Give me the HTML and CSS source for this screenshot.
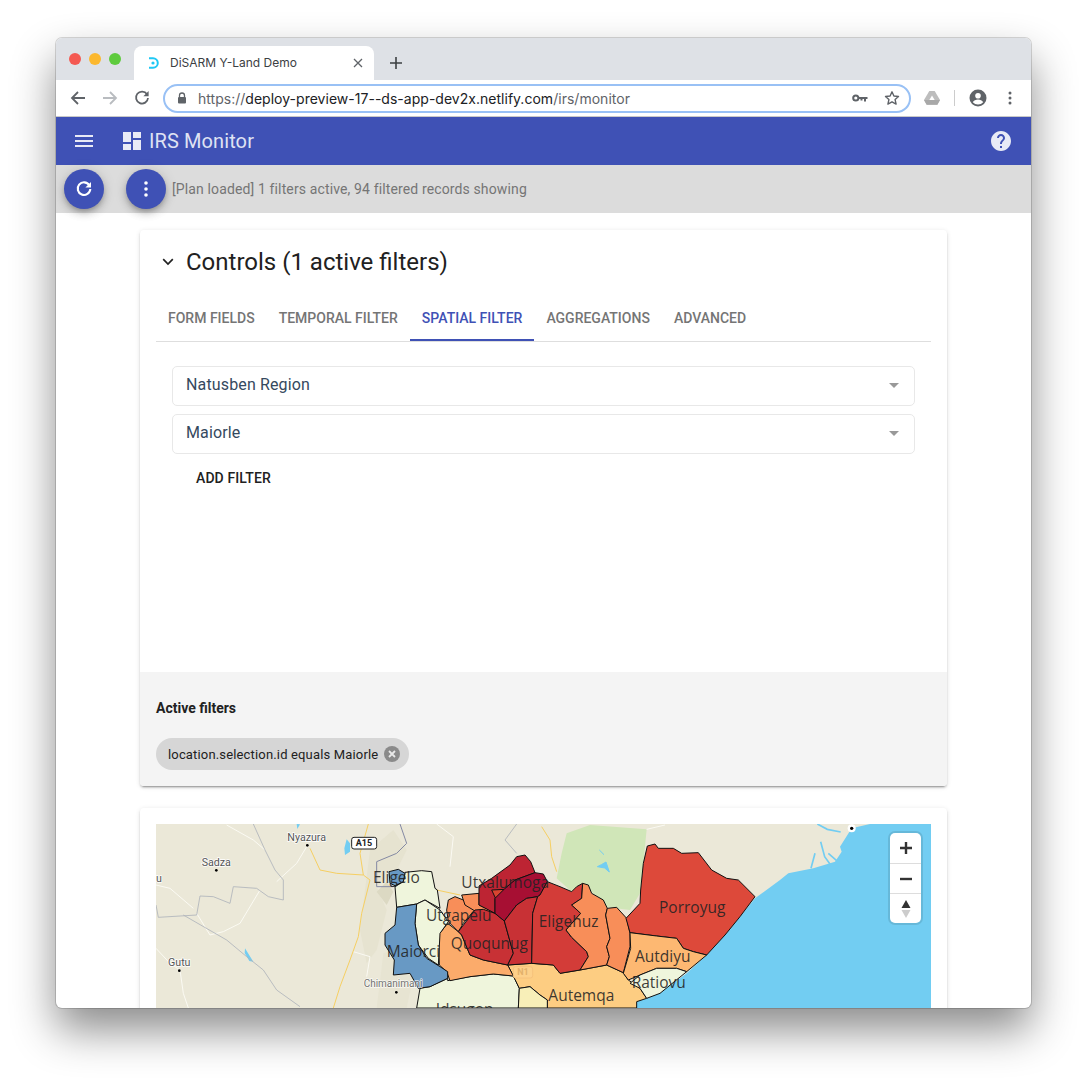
FILE: index.html
```html
<!DOCTYPE html>
<html lang="en">
<head>
<meta charset="utf-8">
<title>DiSARM Y-Land Demo</title>
<link rel="stylesheet" href="styles.css">
</head>
<body>
<div class="window">
  <div class="titlebar">
    <div class="lights"><span class="light red"></span><span class="light amber"></span><span class="light green"></span></div>
    <div class="tab">
      <svg class="favicon" viewBox="0 0 12 12" width="12" height="12"><path d="M1 1.200h4a4.800 4.800 0 0 1 0 9.600H1" fill="none" stroke="#1ec8f5" stroke-width="2"/><circle cx="5" cy="6" r="1.600" fill="#1ec8f5"/></svg>
      <span class="tab-title">DiSARM Y-Land Demo</span>
      <svg class="tab-close" viewBox="0 0 10 10" width="10" height="10"><path d="M1 1l8 8M9 1l-8 8" stroke="#5f6368" stroke-width="1.300"/></svg>
    </div>
    <svg class="new-tab" viewBox="0 0 12 12" width="12" height="12"><path d="M6 0v12M0 6h12" stroke="#3c4043" stroke-width="1.600"/></svg>
  </div>

  <div class="toolbar">
    <span class="tool"><svg viewBox="0 0 16 16" width="16" height="16"><path d="M15 8H2.500M8 2L2 8l6 6" fill="none" stroke="#5f6368" stroke-width="1.800"/></svg></span>
    <span class="tool"><svg viewBox="0 0 16 16" width="16" height="16"><path d="M1 8h12.500M8 2l6 6-6 6" fill="none" stroke="#b9bcc0" stroke-width="1.800"/></svg></span>
    <span class="tool"><svg viewBox="0 0 16 16" width="16" height="16"><path d="M13 4.200A6 6 0 1 0 14 8" fill="none" stroke="#5f6368" stroke-width="1.800"/><path d="M14.600 1v5.200H9.400z" fill="#5f6368"/></svg></span>
    <div class="omnibox">
      <svg class="lock" viewBox="0 0 10 12" width="10" height="12"><path d="M2.500 5V3.500a2.500 2.500 0 0 1 5 0V5" fill="none" stroke="#5f6368" stroke-width="1.300"/><rect x="1" y="5" width="8" height="6.500" rx="1" fill="#5f6368"/></svg>
      <span class="url"><span class="url-dim">https://</span>deploy-preview-17--ds-app-dev2x.netlify.com<span class="url-dim">/irs/monitor</span></span>
      <svg class="key" viewBox="0 0 16 9" width="16" height="9"><circle cx="3.800" cy="4" r="2.600" fill="none" stroke="#5f6368" stroke-width="2"/><path d="M6 3h9.500v2H14v2.400h-2V5h-1.500v1.600h-2V5H6z" fill="#5f6368"/></svg>
      <svg class="star" viewBox="0 0 16 16" width="16" height="16"><path d="M8 1.800l1.900 4.200 4.600.5-3.400 3.100 1 4.500L8 11.800l-4.100 2.300 1-4.500L1.500 6.500l4.600-.5z" fill="none" stroke="#5f6368" stroke-width="1.400" stroke-linejoin="round"/></svg>
    </div>
    <svg class="drive" viewBox="0 0 16 14" width="16" height="14"><path d="M5.300 0h5.400L16 9l-2.700 4.700H2.700L0 9z" fill="#bdbdbd"/><path d="M8 4.500L10.700 9H5.300z" fill="#fff"/><path d="M0 9h16l-2.700 4.700H2.700z" fill="#a8a8a8"/></svg>
    <span class="separator"></span>
    <svg class="account" viewBox="0 0 18 18" width="18" height="18"><circle cx="9" cy="9" r="8.500" fill="#5f6368"/><circle cx="9" cy="6.800" r="2.800" fill="#fff"/><path d="M3.800 13.200c1-2 3-2.800 5.200-2.800s4.200.8 5.200 2.800A6.900 6.900 0 0 1 9 15.500a6.900 6.900 0 0 1-5.200-2.300z" fill="#fff"/></svg>
    <svg class="kebab" viewBox="0 0 4 14" width="4" height="14"><circle cx="2" cy="2" r="1.500" fill="#5f6368"/><circle cx="2" cy="7" r="1.500" fill="#5f6368"/><circle cx="2" cy="12" r="1.500" fill="#5f6368"/></svg>
  </div>

  <header class="appbar">
    <svg class="menu-icon" viewBox="0 0 18 12" width="18" height="12"><path d="M0 1h18M0 6h18M0 11h18" stroke="#e8eaf6" stroke-width="2"/></svg>
    <svg class="dash-icon" viewBox="0 0 18 18" width="18" height="18"><path d="M0 0h8v10H0zM0 12h8v6H0zM10 0h8v6h-8zM10 8h8v10h-8z" fill="#e8eaf6"/></svg>
    <span class="app-title">IRS Monitor</span>
    <svg class="help-icon" viewBox="2 2 20 20" width="20" height="20"><path fill="#e8eaf6" d="M12 2C6.480 2 2 6.480 2 12s4.480 10 10 10 10-4.480 10-10S17.520 2 12 2zm1 17h-2v-2h2v2zm2.070-7.750l-.9.920C13.450 12.900 13 13.500 13 15h-2v-.5c0-1.100.45-2.100 1.170-2.830l1.240-1.260c.37-.36.59-.86.59-1.410 0-1.100-.9-2-2-2s-2 .9-2 2H8c0-2.210 1.790-4 4-4s4 1.790 4 4c0 .88-.36 1.680-.93 2.250z"/></svg>
  </header>

  <div class="statusbar">
    <span class="fab"><svg viewBox="0 0 18 18" width="18" height="18"><path d="M14.300 5.200A6.300 6.300 0 1 0 15.300 9" fill="none" stroke="#fff" stroke-width="2.100"/><path d="M16 2v5.600h-5.600z" fill="#fff"/></svg></span>
    <span class="fab fab-second"><svg viewBox="0 0 4 16" width="4" height="16"><circle cx="2" cy="2" r="1.800" fill="#fff"/><circle cx="2" cy="8" r="1.800" fill="#fff"/><circle cx="2" cy="14" r="1.800" fill="#fff"/></svg></span>
    <span class="status-text">[Plan loaded] 1 filters active, 94 filtered records showing</span>
  </div>

  <main class="content">
    <section class="card controls">
      <div class="controls-head">
        <svg class="chevron" viewBox="0 0 12 8" width="12" height="8"><path d="M1.200 1.200L6 6l4.800-4.800" fill="none" stroke="#212121" stroke-width="1.700"/></svg>
        <h2 class="controls-title">Controls (1 active filters)</h2>
      </div>
      <nav class="tabs">
        <span class="tab-item">Form fields</span>
        <span class="tab-item">Temporal filter</span>
        <span class="tab-item tab-active">Spatial filter</span>
        <span class="tab-item">Aggregations</span>
        <span class="tab-item">Advanced</span>
      </nav>
      <div class="panel">
        <div class="select"><span>Natusben Region</span><i class="caret"></i></div>
        <div class="select"><span>Maiorle</span><i class="caret"></i></div>
        <button class="add-filter" type="button">Add filter</button>
      </div>
      <div class="active-filters">
        <div class="active-label">Active filters</div>
        <div class="chip">
          <span>location.selection.id equals Maiorle</span>
          <svg class="chip-close" viewBox="0 0 16 16" width="16" height="16"><circle cx="8" cy="8" r="8" fill="#8a8a8a"/><path d="M5 5l6 6M11 5l-6 6" stroke="#e8e8e8" stroke-width="1.800"/></svg>
        </div>
      </div>
    </section>

    <section class="card map-card">
      <div class="map">
        <svg class="map-svg" viewBox="18 12 2325 552" width="775" height="184" preserveAspectRatio="none">
          <rect x="18" y="12" width="2325" height="552" fill="#ebe8d8"/>
          <!-- terrain -->
          <path d="M660 90l70-60 40 60-30 60-60 50 30 70-30 120-30 40-20-100z" fill="#e6e3d0"/>
          <path d="M700 400l60-20 30 90-20 94h-90z" fill="#e7e4d2"/>
          <path d="M680 215l30-30 20 30-20 40zM800 200l25-15 10 30-25 10z" fill="#dcd9c3"/>
          <g transform="translate(1170 0)"><path d="M80 40l70-25 170 13-10 102-10 90-30 50-70-8-70-72-35 25-45-40 15-75z" fill="#d0e6b8"/></g>
          <!-- sea -->
          <g transform="translate(1170 0)">
            <path d="M990 12l-55 13-35 55 5 15-20 30-65 20-75 15-25 20-75 55-85 105-60 65-60 55-80 60-70 25v19h883V12z" fill="#72cdf2"/>
            <path d="M842 65l12 45 18 25M825 100l-12 45M865 100l25 22M832 12l30 16 40 8" fill="none" stroke="#72cdf2" stroke-width="5"/>
            <path d="M178 90l14 14M172 140l22 4 14 12-10-30-14 8z" fill="#72cdf2" stroke="#72cdf2" stroke-width="3"/>
          </g>
          <!-- lakes -->
          <path d="M590 58l10 12v25l-15 10-2-20zM285 385l25 40-12-2-14-24zM440 12l10 1-8 14z" fill="#72cdf2"/>
          <!-- roads -->
          <g fill="none" stroke="#fbfaf3" stroke-width="3">
            <path d="M230 15l80 45 35 30M380 185l60-55 30-50M330 210l-60 100-50 25-40 10-40-65M18 195l42 10 70 60M18 385l42 45 30 20 10 70 15 44M610 395l50 15-10 60M860 12l50 38-10 90"/>
            <path d="M1490 28l55-13" />
          </g>
          <g fill="none" stroke="#f6cf62" stroke-width="3">
            <path d="M655 12l-25 88 10 65 20 15-25 100-10 70-25 70-30 80-20 64M480 85l30 65 50 10 80 5M860 210l70 15M1175 20l25 40 5 50 15 45"/>
          </g>
          <!-- borders -->
          <g fill="none" stroke="#afb3ba" stroke-width="2.500">
            <path d="M310 12l35 78 30 60 25 30v60l-45-10-35-25-70-5-10 50-50-20-40-2-10 57-115 7-7-37M100 285l130 75 60 50 50 40 40 60 70 50"/>
            <path d="M1100 12l-35 48 35 40"/>
          </g>
          <path d="M750 12l20 58-30 30-60 25v75h50" fill="none" stroke="#8489a3" stroke-width="3"/>

          <!-- regions -->
          <g class="regions">
            <polygon class="r-pale" points="893,482 960,470 1030,462 1090,468 1108,505 1105,564 800,564 810,505 840,500 893,475"/>
            <g transform="translate(930 90)">
              <polygon class="r-sand" points="143,345 215,340 280,345 300,370 360,360 440,345 490,368 505,390 540,415 560,445 530,455 530,474 262,474 262,450 240,435 210,410 178,415 160,378"/>
              <polygon class="r-yellow" points="178,415 210,410 240,435 262,450 262,474 175,474"/>
            </g>
            <polygon class="r-peach" points="865,345 893,310 925,335 935,345 960,405 1000,420 1073,435 1090,468 1030,462 960,470 900,482 890,455 868,435"/>
            <polygon class="r-pale" points="765,157 815,152 845,155 855,205 862,210 870,265 825,240 800,252 740,262 735,200 760,185"/>
            <polygon class="r-orange" points="895,240 915,230 940,240 975,268 940,310 925,335 895,305 890,270"/>
            <polygon class="r-pale" points="800,252 825,240 870,270 895,305 870,340 865,435 835,415 805,375 795,310"/>
            <path class="r-blue" d="M740 262l60-10-5 58 10 65 25 40 40 25 23 15v20l-53 25-35 5-25-45-50 5 3-45-28-45v-35l30-25zM717 155l28-7 20 12-5 25-25 12-15-7z"/>
            <g transform="translate(930 90)">
              <polygon class="r-orange" points="5,135 57,130 57,165 100,185 90,215 40,180 15,165"/>
              <polygon class="r-red" points="-5,245 45,180 70,178 105,190 133,213 160,310 143,345 70,330 30,315 5,255"/>
              <polygon class="r-crimson" points="57,108 95,85 150,45 170,20 195,15 212,35 225,68 165,90 105,145 105,190 57,165"/>
              <polygon class="r-inset" points="95,120 135,118 108,148"/>
              <polygon class="r-maroon" points="105,145 135,115 165,90 225,68 250,72 262,95 240,135 233,140 200,145 170,165 133,213 105,190"/>
              <polygon class="r-red" points="133,213 170,165 200,145 233,140 218,190 215,340 143,345 160,310"/>
              <polygon class="r-redorange" points="233,140 240,135 262,95 300,110 335,125 350,110 368,100 365,145 335,165 362,190 318,240 335,262 380,305 385,320 360,360 300,370 280,345 215,340 218,190"/>
              <polygon class="r-orange" points="368,100 385,105 395,130 430,150 442,175 437,195 450,265 440,290 448,320 440,345 360,360 385,320 380,305 335,262 318,240 362,190 335,165 365,145"/>
              <polygon class="r-orange" points="442,175 470,172 500,205 510,250 510,290 490,368 440,345 448,320 440,290 450,265 437,195"/>
            </g>
            <g transform="translate(1170 0)">
              <path class="r-tomato" d="M322 78l23-6 10 13h45l25 15 50-2 40 52 45 25 35 5 50 50-45 60-45 55-55 60-40-10-30-10-20-30-60-7-80-10-12-43 42-45 2-40 8-80z"/>
              <path class="r-tan" d="M270 338l80 10 60 7 20 30 30 10 40 10-60 50-30-10h-60l-50 20-35 15-15-20 22-75z"/>
              <path class="r-pale" d="M300 465l50-20h60l30 10-80 65-40 15-20-30-30-15z"/>
            </g>
          </g>

          <!-- base map places -->
          <g class="places">
            <text class="place" x="412" y="62">Nyazura</text>
            <text class="place" x="155" y="137">Sadza</text>
            <text class="place" x="54" y="437">Gutu</text>
            <text class="place" x="18" y="186">u</text>
            <text class="place place-fade" x="641" y="502">Chimanimani</text>
            <circle cx="472" cy="76" r="4"/><circle cx="199" cy="151" r="4"/><circle cx="88" cy="452" r="4"/><circle cx="739" cy="517" r="4"/>
            <circle cx="2105" cy="25" r="12" fill="#fff"/><circle cx="2105" cy="25" r="5"/>
          </g>
          <rect x="605" y="52" width="75" height="35" rx="7" fill="#fff" stroke="#222" stroke-width="3"/>
          <text class="shield" x="642" y="78">A15</text>
          <rect x="1090" y="440" width="58" height="34" rx="7" fill="#fdd08a" stroke="#f6c27c" stroke-width="3"/>
          <text class="shield shield-faint" x="1119" y="466">N1</text>

          <!-- region labels -->
          <g class="labels">
            <text class="label" x="669" y="190">Eligelo</text>
            <text class="label" x="934" y="203">Utxalumoga</text>
            <text class="label" x="828" y="302">Utgapelu</text>
            <text class="label" x="902" y="386">Quoqunug</text>
            <text class="label" x="710" y="412">Maiorci</text>
            <text class="label" x="1166" y="322">Eligehuz</text>
            <text class="label" x="1527" y="280">Porroyug</text>
            <text class="label" x="1455" y="425">Autdiyu</text>
            <text class="label" x="1445" y="504">Ratiovu</text>
            <text class="label" x="1195" y="544">Autemqa</text>
            <text class="label" x="857" y="585">Idsugon</text>
          </g>
        </svg>
        <div class="map-controls">
          <span class="map-btn"><svg viewBox="0 0 12 12" width="12" height="12"><path d="M6 0v12M0 6h12" stroke="#333" stroke-width="2.400"/></svg></span>
          <span class="map-btn"><svg viewBox="0 0 12 12" width="12" height="12"><path d="M0 6h12" stroke="#333" stroke-width="2.400"/></svg></span>
          <span class="map-btn"><svg viewBox="0 0 10 18" width="10" height="18"><path d="M5 0l4.500 8H.5z" fill="#333"/><path d="M5 18L.5 10h9z" fill="#ccc"/></svg></span>
        </div>
      </div>
    </section>
  </main>
</div>
</body>
</html>
```
FILE: styles.css
```css
* { box-sizing: border-box; }
html, body { margin: 0; height: 1082px; overflow: hidden; background: #fff; }
body { padding: 38px 56px 74px; font-family: Roboto, "Liberation Sans", sans-serif; }

.window {
  width: 975px;
  height: 970px;
  overflow: hidden;
  border-radius: 6px;
  background: #fff;
  box-shadow: 0 0 0 1px rgba(0,0,0,.15), 0 22px 44px rgba(0,0,0,.46);
}

/* Browser chrome */
.titlebar { height: 42px; background: #dee1e6; display: flex; align-items: flex-end; }
.lights { display: flex; gap: 8px; margin: 0 13px; align-self: flex-start; padding-top: 15px; }
.light { width: 12px; height: 12px; border-radius: 50%; }
.red { background: #f45952; }
.amber { background: #fcb82e; }
.green { background: #5ecb3e; }
.tab {
  width: 240px; height: 34px;
  background: #fff;
  border-radius: 8px 8px 0 0;
  display: flex; align-items: center;
  padding: 0 11px 0 14px;
}
.favicon { flex: none; margin-right: 10px; }
.tab-title { font: 12px Inter, Roboto, sans-serif; color: #3c4043; flex: 1; white-space: nowrap; padding-bottom: 2px; }
.new-tab { margin: 0 0 11px 16px; }

.toolbar {
  height: 37px;
  background: #fff;
  border-bottom: 1px solid #c9c9c9;
  display: flex; align-items: center;
  padding-left: 6px;
}
.tool { width: 32px; display: flex; justify-content: center; }
.omnibox {
  width: 748px; height: 29px; margin-left: 5px;
  border: 2px solid #99c1f5;
  border-radius: 15px;
  display: flex; align-items: center;
  padding-left: 12px;
}
.lock { flex: none; }
.url { margin-left: 11px; font: 14px Inter, Roboto, sans-serif; letter-spacing: .02px; color: #202124; white-space: nowrap; flex: 1; }
.url-dim { color: #5f6368; }
.key { margin-right: 16px; flex: none; }
.star { margin-right: 9px; flex: none; }
.drive { margin-left: 13px; flex: none; }
.separator { width: 1px; height: 16px; background: #ccc; margin: 0 14px; }
.account { flex: none; }
.kebab { margin-left: 21px; flex: none; }

.appbar {
  height: 48px; background: #3f51b5;
  display: flex; align-items: center;
  padding: 0 20px 0 19px;
}
.dash-icon { margin-left: 30px; }
.app-title { margin-left: 8px; font-size: 20px; letter-spacing: .1px; color: #dfe2f3; flex: 1; }
.help-icon { flex: none; }

.statusbar {
  height: 48px; background: #dcdcdc;
  display: flex; align-items: center;
  padding-left: 8px;
}
.fab {
  width: 40px; height: 40px; border-radius: 50%;
  background: #3f51b5;
  display: flex; align-items: center; justify-content: center;
  box-shadow: 0 3px 5px -1px rgba(0,0,0,.2), 0 5px 8px rgba(0,0,0,.14), 0 1px 14px rgba(0,0,0,.12);
  flex: none;
}
.fab-second { margin-left: 22px; }
.status-text { margin-left: 6px; font-size: 14px; color: #757575; letter-spacing: .13px; }

/* Content */
.content { padding: 17px 84px 0; }
.card {
  background: #fff;
  border-radius: 4px;
  box-shadow: 0 3px 1px -2px rgba(0,0,0,.2), 0 2px 2px rgba(0,0,0,.14), 0 1px 5px rgba(0,0,0,.12);
}
.controls { margin-bottom: 22px; overflow: hidden; }
.controls-head { height: 63px; display: flex; align-items: center; padding-left: 22px; }
.chevron { flex: none; }
.controls-title { margin: 0 0 0 12px; font-size: 24px; font-weight: 400; color: #212121; }
.tabs { margin: 0 16px; display: flex; border-bottom: 1px solid #dedede; }
.tab-item {
  height: 48px; padding: 3px 12px 0;
  display: flex; align-items: center;
  font-size: 14px; font-weight: 500;
  text-transform: uppercase;
  color: #757575;
  border-bottom: 2px solid transparent;
}
.tab-active { color: #3f51b5; border-bottom-color: #3f51b5; }
.panel { height: 330px; padding: 24px 32px 0; }
.select {
  height: 40px; margin-bottom: 8px;
  border: 1px solid #e8e8e8; border-radius: 5px;
  display: flex; align-items: center; justify-content: space-between;
  padding: 0 15px 3px 13px;
  font-size: 16px; letter-spacing: .14px; color: #35495e;
}
.caret { width: 0; height: 0; border: 5px solid transparent; border-top: 5px solid #999; border-bottom: 0; margin-top: 2px; }
.add-filter {
  display: block; height: 32px; margin: 0 0 0 8px; padding: 0 16px;
  background: none; border: 0;
  font: 500 14px Roboto, sans-serif; letter-spacing: .1px; text-transform: uppercase;
  color: #212121;
}
.active-filters { height: 114px; background: #f4f4f4; padding: 28px 16px 0; }
.active-label { font-size: 14px; line-height: 16px; font-weight: 700; color: #212121; }
.chip {
  display: inline-flex; align-items: center;
  height: 32px; margin-top: 22px; padding: 0 9px 0 12px;
  background: #d6d6d6; border-radius: 16px;
  font-size: 13px; color: #212121;
  letter-spacing: .16px;
}
.chip-close { margin-left: 6px; flex: none; }

.map-card { padding: 16px; }
.map { position: relative; height: 184px; overflow: hidden; }
.map-svg { display: block; }
.regions path, .regions polygon { stroke: #111; stroke-width: 3; stroke-linejoin: round; }
.r-pale { fill: #eff5dc; }
.r-yellow { fill: #f8efb8; }
.r-sand { fill: #fdcd82; }
.r-peach { fill: #fbab6b; }
.r-orange { fill: #f88e59; }
.r-blue { fill: #6899c4; }
.r-red { fill: #c83135; }
.r-crimson { fill: #bd2433; }
.r-maroon { fill: #a70f33; }
.r-redorange { fill: #d33c38; }
.r-inset { fill: #d8442f; }
.r-tomato { fill: #dd493a; }
.r-tan { fill: #fdb872; }
.place { font: 32px Roboto, sans-serif; fill: #555; stroke: #fff; stroke-width: 4px; paint-order: stroke; }
.place-fade { font-size: 30px; opacity: .8; }
.shield { font: 700 27px Roboto, sans-serif; text-anchor: middle; fill: #222; }
.shield-faint { fill: #e3b06a; }
.label { font: 46.5px "Open Sans", sans-serif; fill: #222; fill-opacity: .88; }

.map-controls {
  position: absolute; top: 9px; right: 10px; width: 31px;
  background: #fff;
  border-radius: 5px;
  box-shadow: 0 0 0 2px rgba(0,0,0,.1);
  display: flex; flex-direction: column;
}
.map-btn {
  height: 30px;
  display: flex; align-items: center; justify-content: center;
  border-top: 1px solid #ddd;
}
.map-btn:first-child { border-top: 0; }
```
